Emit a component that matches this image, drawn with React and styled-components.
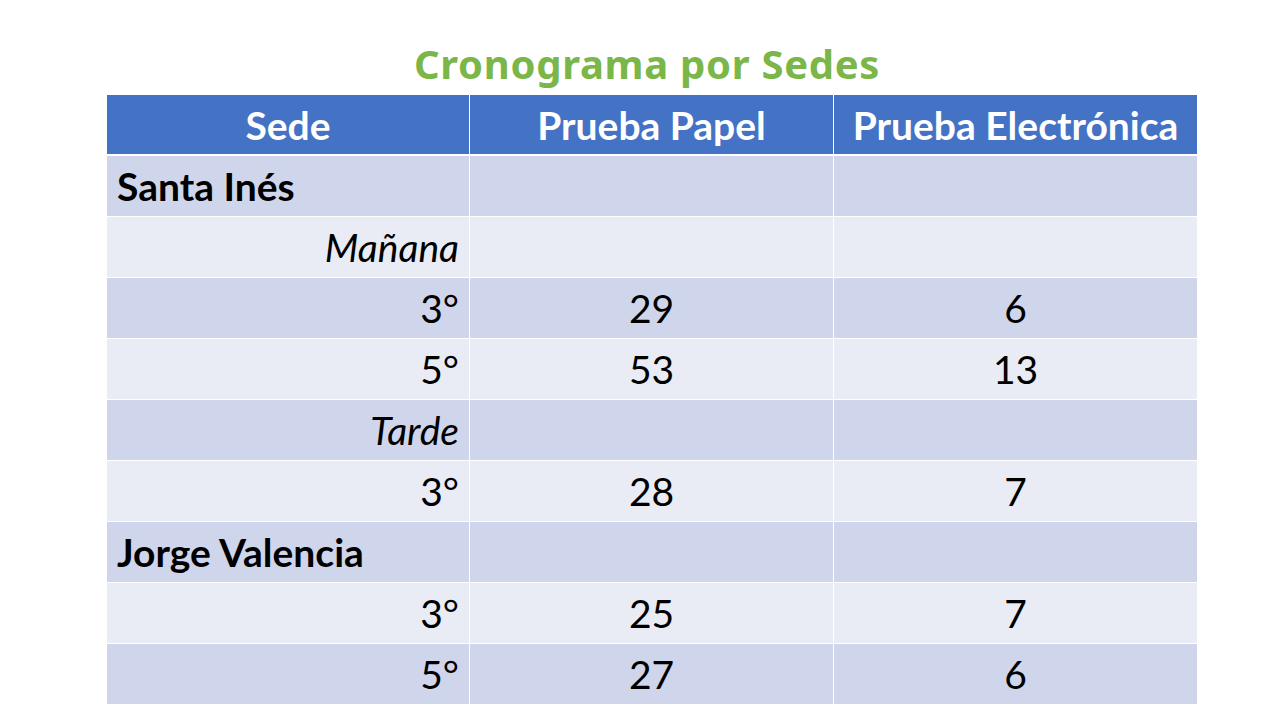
import React from "react";
import styled, { createGlobalStyle } from "styled-components";

const Global = createGlobalStyle`
  html, body {
    margin: 0;
    padding: 0;
    background: #ffffff;
  }
`;

const Slide = styled.div`
  width: 1280px;
  height: 720px;
  display: flex;
  flex-direction: column;
  align-items: flex-start;
  box-sizing: border-box;
  padding: 38px 0 0 107px;
  background: #ffffff;
`;

const Title = styled.h1`
  width: 1080px;
  margin: 0 0 5px 0;
  height: 52px;
  line-height: 52px;
  text-align: center;
  font-family: "Comic Sans MS", "Noto Sans", sans-serif;
  font-weight: 700;
  font-size: 40px;
  letter-spacing: 0.7px;
  color: #7ab648;
`;

const Table = styled.div`
  width: 1090px;
  display: grid;
  grid-template-columns: 362px 363px 363px;
  column-gap: 1px;
  row-gap: 1px;
  font-family: Lato, "Liberation Sans", sans-serif;
  font-size: 39px;
  color: #000000;
  background: #ffffff;
`;

const HeadCell = styled.div`
  height: 59px;
  display: flex;
  align-items: center;
  justify-content: center;
  background: #4472c4;
  color: #ffffff;
  font-weight: 700;
  border-bottom: 1px solid #ffffff;
`;

const Cell = styled.div`
  height: 60px;
  display: flex;
  align-items: center;
  box-sizing: border-box;
  padding: 0 10px;
  background: ${p => (p.$odd ? "#cfd5ea" : "#e9ebf5")};
  justify-content: ${p =>
    p.$align === "left" ? "flex-start" : p.$align === "right" ? "flex-end" : "center"};
  font-weight: ${p => (p.$bold ? 700 : 400)};
  font-style: ${p => (p.$italic ? "italic" : "normal")};
`;

const rows = [
  { label: "Santa Inés", type: "sede" },
  { label: "Mañana", type: "turno" },
  { label: "3°", papel: "29", elec: "6" },
  { label: "5°", papel: "53", elec: "13" },
  { label: "Tarde", type: "turno" },
  { label: "3°", papel: "28", elec: "7" },
  { label: "Jorge Valencia", type: "sede" },
  { label: "3°", papel: "25", elec: "7" },
  { label: "5°", papel: "27", elec: "6" },
];

export default function App() {
  return (
    <>
      <Global />
      <Slide>
        <Title>Cronograma por Sedes</Title>
        <Table>
          <HeadCell>Sede</HeadCell>
          <HeadCell>Prueba Papel</HeadCell>
          <HeadCell>Prueba Electrónica</HeadCell>
          {rows.map((r, i) => {
            const odd = i % 2 === 0;
            return (
              <React.Fragment key={i}>
                <Cell
                  $odd={odd}
                  $align={r.type === "sede" ? "left" : "right"}
                  $bold={r.type === "sede"}
                  $italic={r.type === "turno"}
                >
                  {r.label}
                </Cell>
                <Cell $odd={odd}>{r.papel}</Cell>
                <Cell $odd={odd}>{r.elec}</Cell>
              </React.Fragment>
            );
          })}
        </Table>
      </Slide>
    </>
  );
}
